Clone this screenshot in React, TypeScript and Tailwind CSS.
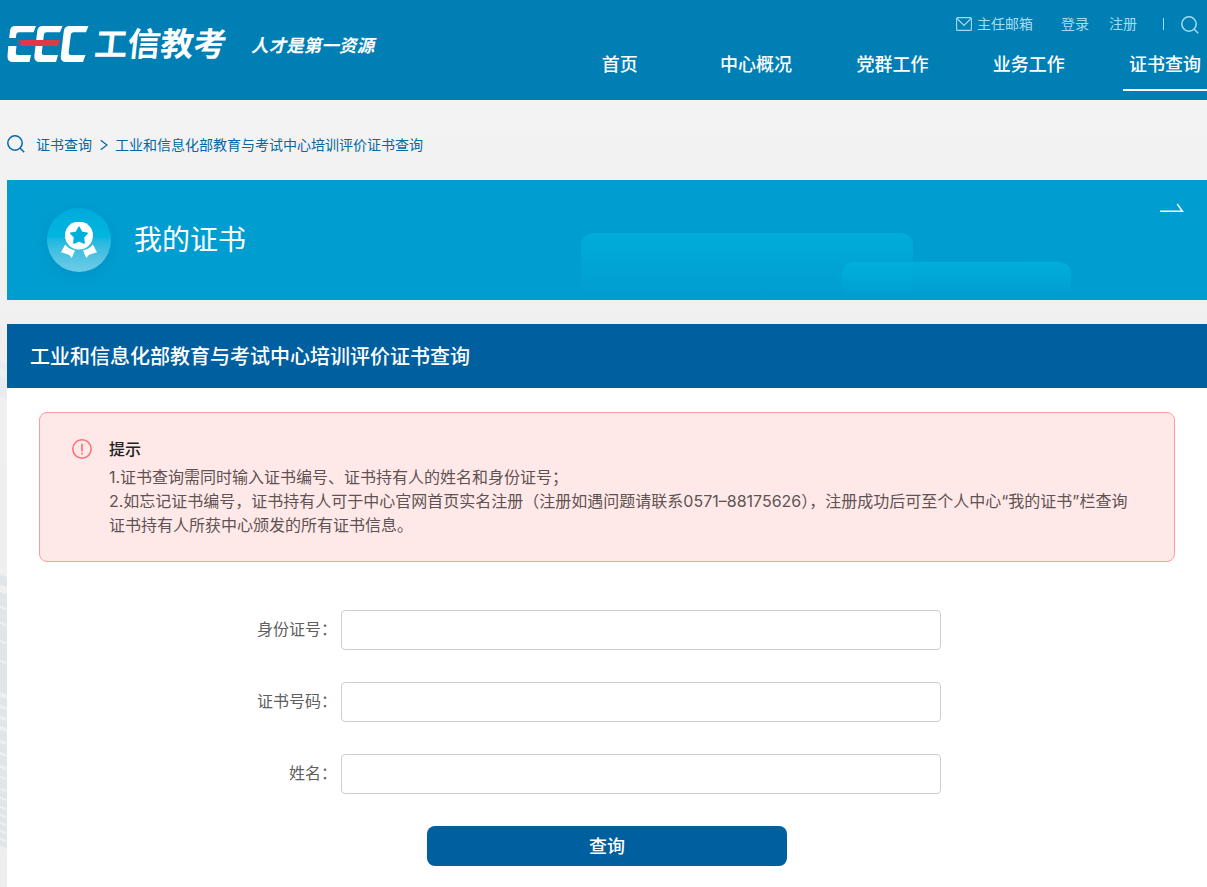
import { useState } from "react";
import type { ReactNode } from "react";

const NAV_ITEMS = ["首页", "中心概况", "党群工作", "业务工作", "证书查询"];

const FIELDS = [
  { id: "idCard", label: "身份证号：" },
  { id: "certNo", label: "证书号码：" },
  { id: "name", label: "姓名：" },
];

export default function App() {
  return (
    <div className="relative h-[887px] w-[1207px] overflow-hidden bg-linear-to-b from-[#f4f4f4] via-[#f0f0f0] via-40% to-[#eeeeee] font-['Noto_Sans_CJK_SC',sans-serif]">
      <PageBackdrop />
      <Header />
      <main className="relative ml-[7px]">
        <Breadcrumb />
        <MyCertBanner />
        <QueryPanel />
      </main>
    </div>
  );
}

function Header() {
  return (
    <header className="relative flex h-[100px] justify-between bg-[#007fb4] text-white">
      <div className="flex pl-[7px]">
        <LogoMark />
        <span className="ml-1 mt-5 -skew-x-6 whitespace-nowrap text-[33px] font-bold leading-[44px]">
          工信教考
        </span>
        <span className="ml-[23px] mt-[33px] -skew-x-12 whitespace-nowrap text-[17.6px] font-bold leading-6">
          人才是第一资源
        </span>
      </div>

      <div className="flex flex-col items-end">
        <div className="flex h-[46px] items-center pr-2 text-sm text-[#a6dcef]">
          <MailIcon />
          <a className="ml-[5px]">主任邮箱</a>
          <a className="ml-7">登录</a>
          <a className="ml-5">注册</a>
          <span className="ml-[26px] mt-0.5 h-3 w-px bg-[#a6dcef]" />
          <SearchIcon className="ml-[17px] mt-1 size-[18px]" />
        </div>
        <nav className="flex gap-[52.3px]">
          {NAV_ITEMS.map((item) => (
            <a
              key={item}
              className={`h-[45px] w-[84px] whitespace-nowrap border-b-2 text-center text-lg font-medium leading-[34px] ${
                item === "证书查询" ? "border-white" : "border-transparent"
              }`}
            >
              {item}
            </a>
          ))}
        </nav>
      </div>
    </header>
  );
}

function Breadcrumb() {
  return (
    <div className="flex h-20 items-center pt-[8px] text-sm text-[#0068a6]">
      <SearchIcon className="size-[18px]" />
      <span className="ml-[11px]">证书查询</span>
      <svg className="ml-2 mt-0.5 h-3 w-2" viewBox="0 0 8 12" fill="none" stroke="currentColor" strokeWidth="1.2">
        <path d="M0.7 1.2 7 6 0.7 10.8" />
      </svg>
      <span className="ml-[7px]">工业和信息化部教育与考试中心培训评价证书查询</span>
    </div>
  );
}

function MyCertBanner() {
  return (
    <section className="relative flex h-[120px] items-center overflow-hidden bg-[#009ed0] pl-10 text-white">
      <div className="absolute left-[574px] top-[53px] h-[60px] w-[332px] rounded-t-xl bg-linear-to-b from-[#00acd9] to-[#009ed0]/0" />
      <div className="absolute left-[835px] top-[82px] h-[34px] w-[229px] rounded-t-xl bg-linear-to-b from-[#00b0dc]/90 to-[#009ed0]/0" />
      <div className="flex size-16 items-center justify-center rounded-full bg-linear-to-b from-[#00aadb] via-[#00b6df] via-45% to-[#6dcce6] shadow-[0_4px_16px_rgba(0,125,185,0.35)]">
        <MedalIcon />
      </div>
      <h2 className="-mt-1 ml-[23px] text-[28px] leading-10">我的证书</h2>
      <svg className="absolute right-[23px] top-[23px] h-[10px] w-6" viewBox="0 0 24 10" fill="none" stroke="currentColor" strokeWidth="1.4">
        <path d="M0 8.3H22.5L17.2 1" />
      </svg>
    </section>
  );
}

function QueryPanel() {
  return (
    <section className="mt-6 bg-white">
      <h1 className="h-16 bg-[#005f9e] pl-[23px] text-xl font-medium leading-[64px] text-white">
        工业和信息化部教育与考试中心培训评价证书查询
      </h1>
      <div className="px-8 pb-10 pt-6">
        <Notice />
        <QueryForm />
      </div>
    </section>
  );
}

function Notice() {
  return (
    <div className="flex h-[150px] rounded-lg border border-[#ff9a9d] bg-[#ffe8e8] pl-8 pt-[26px]">
      <svg className="size-5 shrink-0" viewBox="0 0 20 20" fill="none" stroke="#ff6b70">
        <circle cx="10" cy="10" r="9.2" strokeWidth="1.5" />
        <path d="M10 4.8v7.6M10 13.8v1.6" strokeWidth="1.6" />
      </svg>
      <div className="ml-[17px] whitespace-nowrap text-base leading-6 text-[#5e5353]">
        <p className="-mt-[3px] mb-[5px] font-medium text-[#222]">提示</p>
        <NoticeLine>1.证书查询需同时输入证书编号、证书持有人的姓名和身份证号；</NoticeLine>
        <NoticeLine>
          2.如忘记证书编号，证书持有人可于中心官网首页实名注册（注册如遇问题请联系0571–88175626），注册成功后可至个人中心“我的证书”栏查询
        </NoticeLine>
        <NoticeLine>证书持有人所获中心颁发的所有证书信息。</NoticeLine>
      </div>
    </div>
  );
}

function NoticeLine({ children }: { children: ReactNode }) {
  return <p className="font-['Inter','Noto_Sans_CJK_SC',sans-serif]">{children}</p>;
}

function QueryForm() {
  const [values, setValues] = useState<Record<string, string>>({});

  return (
    <form className="mt-12" onSubmit={(e) => e.preventDefault()}>
      {FIELDS.map((field) => (
        <div key={field.id} className="mb-8 flex h-10">
          <label htmlFor={field.id} className="w-[302px] pr-1 text-right text-base leading-9 text-[#606060]">
            {field.label}
          </label>
          <input
            id={field.id}
            value={values[field.id] ?? ""}
            onChange={(e) => setValues({ ...values, [field.id]: e.target.value })}
            className="h-10 w-[600px] rounded border border-[#cecece] bg-white px-3 outline-none"
          />
        </div>
      ))}
      <button className="mx-auto block h-10 w-[360px] rounded-lg bg-[#005f9e] pb-0.5 text-lg font-medium leading-[38px] text-white">
        查询
      </button>
    </form>
  );
}

function LogoMark() {
  return (
    <svg className="mt-[25px] h-[38px] w-[82px]" viewBox="0 0 82 38" fill="#fff">
      <defs>
        <linearGradient id="logo-red" x1="0" x2="1">
          <stop offset="0" stopColor="#dc3a4c" stopOpacity="0" />
          <stop offset="0.15" stopColor="#dc3a4c" />
        </linearGradient>
      </defs>
      <path d="M29 1H8Q3.5 1 3 6L2.2 13H8.8L9.3 9.5Q9.7 7.3 12 7.3H26.5Z" />
      <path d="M1.3 21H9.5L8.8 27.5Q8.6 30 11 30H24L22.5 37H6Q.2 37 .5 31Z" />
      <path d="M55.5 1H35.5Q31 1 30.3 6L27.3 31Q27 37 33 37H49L51 30H37Q34.6 30 34.8 27.5L36.9 9.5Q37.3 7.3 39.5 7.3H53Z" />
      <path d="M81.5 1H63Q57.5 1 56.8 6L53.8 31Q53.3 37 59 37H76L78.5 30H64Q61.3 30 61.7 27L63.8 10Q64.1 7.3 66.8 7.3H79Z" />
      <path d="M9.5 15H53L51 21H9Z" fill="url(#logo-red)" />
    </svg>
  );
}

function MailIcon() {
  return (
    <svg className="mt-0.5 h-[14px] w-4" viewBox="0 0 16 14" fill="none" stroke="currentColor" strokeWidth="1.1">
      <rect x="0.6" y="0.6" width="14.8" height="12.8" rx="1" />
      <path d="M1 1.5 8 8.5 15 1.5" />
    </svg>
  );
}

function SearchIcon({ className }: { className: string }) {
  return (
    <svg className={className} viewBox="0 0 18 18" fill="none" stroke="currentColor" strokeWidth="1.5">
      <circle cx="8" cy="8" r="7.2" />
      <path d="M13.2 13.2 17.2 17.2" />
    </svg>
  );
}

function MedalIcon() {
  return (
    <svg className="h-9 w-9" viewBox="0 0 36 36">
      <circle cx="18" cy="13.5" r="14" fill="#fff" />
      <path
        d="M18 5.3 20.6 10.2 26.2 11.2 22.4 15.3 23.1 21 18 18.8 12.9 21 13.6 15.3 9.8 11.2 15.4 10.2Z"
        fill="#00b0dc"
        stroke="#00b0dc"
        strokeWidth="1.6"
        strokeLinejoin="round"
      />
      <path d="M4.2 22.6Q7.5 27 14 28.6L10.7 36 8 32.8 0 30.3Z" fill="#fff" />
      <path d="M31.8 22.6Q28.5 27 22 28.6L25.3 36 28 32.8 36 30.3Z" fill="#fff" />
    </svg>
  );
}

// ribbons of light that show in the page margin
const RIBBONS = [
  [575, 10], [592, 14], [608, 14], [624, 16], [642, 18], [662, 18], [680, 12],
  [697, 8], [708, 8], [719, 7], [730, 10], [743, 9], [755, 10], [768, 8],
  [778, 10], [790, 7], [799, 7], [808, 6], [816, 6], [824, 6], [832, 6], [840, 6],
];

function PageBackdrop() {
  return (
    <svg className="absolute left-0 top-0 h-[887px] w-[7px]" viewBox="0 0 7 887">
      <path d="M0 361 7 364V371L0 368ZM0 376 7 379V399L0 395Z" fill="#e8ebef" />
      {RIBBONS.map(([y, h]) => (
        <path key={y} d={`M0 ${y} 7 ${y + 2}V${y + h + 2}L0 ${y + h}Z`} fill="#e0e5ea" />
      ))}
    </svg>
  );
}
